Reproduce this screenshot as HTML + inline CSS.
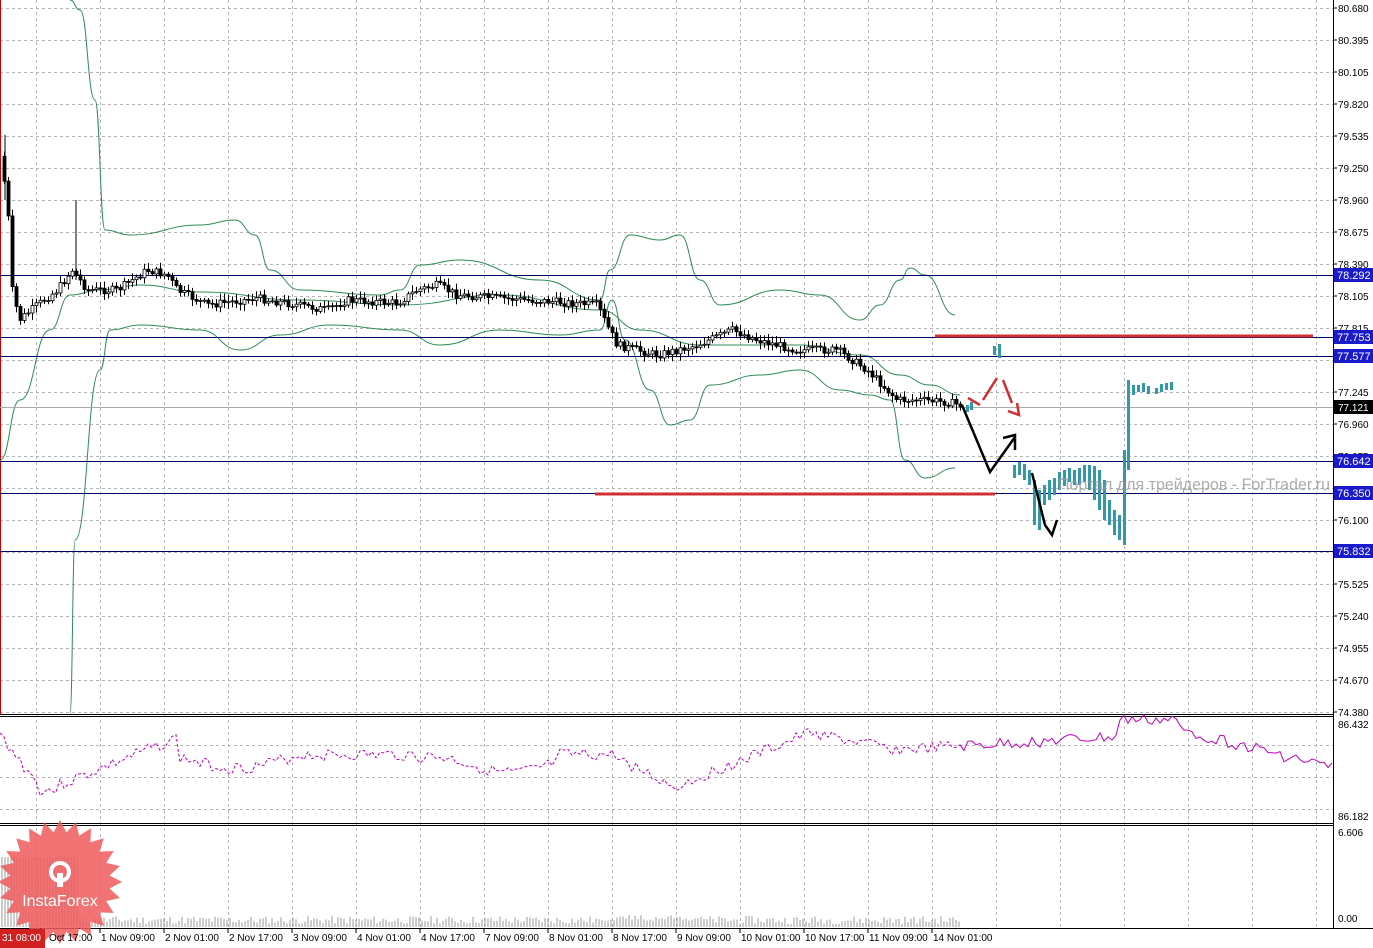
<!DOCTYPE html><html><head><meta charset="utf-8"><style>
body{margin:0;background:#fff;overflow:hidden}
svg{display:block;font-family:"Liberation Sans",sans-serif}
</style></head><body>
<svg id="s" width="1373" height="948" xmlns="http://www.w3.org/2000/svg">
<rect width="1373" height="948" fill="#fff"/>
<g id="grid"></g>
<line x1="0.5" y1="0" x2="0.5" y2="714" stroke="#c00"/>
<g fill="none" stroke="#2e8b57" stroke-width="1">
<path id="b1"/><path id="b2"/><path id="b3"/>
</g>
<g stroke="#000060" stroke-width="1">
<line x1="0" y1="275.5" x2="1333" y2="275.5"/><line x1="0" y1="337.5" x2="1333" y2="337.5"/>
<line x1="0" y1="356.5" x2="1333" y2="356.5"/><line x1="0" y1="461.5" x2="1333" y2="461.5"/>
<line x1="0" y1="493.5" x2="1333" y2="493.5"/><line x1="0" y1="551.5" x2="1333" y2="551.5"/>
</g>
<line x1="0" y1="407.5" x2="1333" y2="407.5" stroke="#aaa"/>
<line x1="935" y1="336" x2="1313" y2="336" stroke="#d03030" stroke-width="3"/>
<line x1="595" y1="494" x2="995" y2="494" stroke="#d03030" stroke-width="3"/>
<g id="candles"></g>
<g id="cyan" fill="#3399aa"></g>
<polyline points="962,405 990,472 1015,437" fill="none" stroke="#000" stroke-width="2.5"/>
<polyline points="1003,438 1015,435 1015,450" fill="none" stroke="#000" stroke-width="2.5"/>
<polyline points="1032,473 1045,525 1052,535 1057,520" fill="none" stroke="#000" stroke-width="2.5"/>
<path d="M968,398 L980,405 M983,400 L997,378 M1003,380 L1012,403 M1008,411 L1019,415 L1017,403" fill="none" stroke="#d03030" stroke-width="2.5"/>
<text x="1058" y="490" font-size="17" fill="#999" opacity="0.8" textLength="272" lengthAdjust="spacingAndGlyphs">Портал для трейдеров - ForTrader.ru</text>
<line x1="0" y1="714.5" x2="1333" y2="714.5" stroke="#000"/>
<line x1="0" y1="716.5" x2="1333" y2="716.5" stroke="#000"/>
<line x1="0" y1="823.5" x2="1333" y2="823.5" stroke="#000"/>
<line x1="0" y1="825.5" x2="1333" y2="825.5" stroke="#000"/>
<line x1="0" y1="928.5" x2="1373" y2="928.5" stroke="#000"/>
<line x1="1333.5" y1="0" x2="1333.5" y2="928" stroke="#000"/>
<polyline id="rsi" fill="none" stroke="#c000c0" stroke-width="1" stroke-dasharray="3,2"></polyline>
<polyline id="rsi2" fill="none" stroke="#c000c0" stroke-width="1"></polyline>
<g id="vol" stroke="#999" stroke-width="1"></g>
<polygon id="star" fill="#f05a5a" opacity="0.85"></polygon>
<g fill="#fff"><circle cx="60" cy="872" r="9" fill="none" stroke="#fff" stroke-width="4"/><rect x="57" y="873" width="6" height="14"/></g>
<text x="60" y="906" font-size="16" fill="#fff" text-anchor="middle">InstaForex</text>
<g id="lab" font-size="10" fill="#000"></g>
<rect x="0" y="929" width="45" height="19" fill="#d02020"/>
<text x="2" y="941" font-size="10" fill="#fff">31 08:00</text>
</svg>
<script>
var NS="http://www.w3.org/2000/svg";
function el(t,a,p){var e=document.createElementNS(NS,t);for(var k in a)e.setAttribute(k,a[k]);document.getElementById(p).appendChild(e);return e}
var G={stroke:"#b4b4b4","stroke-dasharray":"3,3","stroke-width":1};
function gl(a){for(var k in G)a[k]=G[k];el("line",a,"grid")}
for(var x=36;x<1333;x+=64)gl({x1:x+.5,y1:0,x2:x+.5,y2:928});
for(var y=8;y<714;y+=32)gl({x1:0,y1:y+.5,x2:1333,y2:y+.5});
for(var y=745;y<823;y+=32)gl({x1:0,y1:y+.5,x2:1333,y2:y+.5});
function smooth(pts){var d="M"+pts[0][0]+","+pts[0][1];for(var i=1;i<pts.length;i++){var p0=pts[i-1],p1=pts[i],mx=(p0[0]+p1[0])/2;d+=" C"+mx+","+p0[1]+" "+mx+","+p1[1]+" "+p1[0]+","+p1[1];}return d}
document.getElementById("b1").setAttribute("d",smooth([[70,0],[80,10],[95,100],[105,230],[130,235],[200,225],[235,220],[255,235],[270,270],[300,290],[380,295],[400,290],[420,265],[460,260],[540,280],[600,300],[610,270],[630,235],[660,240],[680,235],[700,280],[720,305],[780,290],[820,295],[860,320],[880,305],[900,280],[910,268],[925,275],[955,315]]));
document.getElementById("b2").setAttribute("d",smooth([[70,714],[75,540],[100,370],[110,330],[140,325],[200,330],[240,350],[280,335],[330,325],[400,330],[440,345],[500,330],[560,335],[600,330],[612,300],[625,340],[650,390],[670,425],[690,420],[710,385],[760,375],[800,370],[840,390],[870,395],[890,400],[905,460],[925,478],[955,468]]));
document.getElementById("b3").setAttribute("d",smooth([[0,460],[20,400],[50,330],[70,295],[100,290],[140,285],[200,292],[300,300],[400,305],[500,295],[600,310],[640,330],[700,345],[800,345],[860,355],[900,375],[930,385],[960,395]]));
var P=["80.680","80.395","80.105","79.820","79.535","79.250","78.960","78.675","78.390","78.105","77.815","77.530","77.245","76.960","76.675","76.390","76.100","75.810","75.525","75.240","74.955","74.670","74.380"];
P.forEach(function(p,i){var y=8+i*32;if([11,15,17].indexOf(i)>=0)return;el("line",{x1:1333,y1:y,x2:1337,y2:y,stroke:"#000"},"lab");var t=el("text",{x:1338,y:y+4},"lab");t.textContent=p;});
[["78.292",275],["77.753",337],["77.577",356],["76.642",461],["76.350",493],["75.832",551]].forEach(function(a){el("rect",{x:1334,y:a[1]-7,width:39,height:14,fill:"#1a1acd"},"lab");var t=el("text",{x:1337,y:a[1]+4,fill:"#fff","font-size":"11"},"lab");t.textContent=a[0];});
el("rect",{x:1334,y:400,width:39,height:14,fill:"#000"},"lab");var t=el("text",{x:1338,y:411,fill:"#fff"},"lab");t.textContent="77.121";
[["86.432",728],["86.182",820],["6.606",836],["0.00",922]].forEach(function(a){var t=el("text",{x:1338,y:a[1]},"lab");t.textContent=a[0];});
var TL=["1 Nov 09:00","2 Nov 01:00","2 Nov 17:00","3 Nov 09:00","4 Nov 01:00","4 Nov 17:00","7 Nov 09:00","8 Nov 01:00","8 Nov 17:00","9 Nov 09:00","10 Nov 01:00","10 Nov 17:00","11 Nov 09:00","14 Nov 01:00"];
var t=el("text",{x:49,y:941},"lab");t.textContent="Oct 17:00";
TL.forEach(function(s,i){var x=100+i*64;el("line",{x1:x,y1:928,x2:x,y2:933,stroke:"#000"},"lab");var t=el("text",{x:x+1,y:941},"lab");t.textContent=s;});
var K=[[2,150],[10,200],[15,290],[22,320],[40,305],[60,290],[75,270],[90,290],[120,290],[150,270],[170,275],[180,290],[210,305],[260,298],[300,305],[330,310],[350,300],[400,303],[420,290],[440,285],[460,295],[500,298],[560,302],[600,305],[612,330],[620,345],[660,355],[700,345],[735,330],[760,340],[800,350],[840,350],[870,370],[900,400],[920,400],[950,402],[962,405]];
function f(x){for(var i=1;i<K.length;i++)if(x<=K[i][0]){var a=K[i-1],b=K[i];return a[1]+(b[1]-a[1])*(x-a[0])/(b[0]-a[0]);}return 405}
var seed=7;function r(){seed=(seed*9301+49297)%233280;return seed/233280}
var prev=f(3);
for(var x=3;x<962;x+=4){var c=f(x+4)+(r()-.5)*8,o=prev;var hi=Math.min(o,c)-2-r()*5,lo=Math.max(o,c)+2+r()*5;
el("line",{x1:x+1.5,y1:hi,x2:x+1.5,y2:lo,stroke:"#000"},"candles");
el("rect",{x:x,y:Math.min(o,c),width:3,height:Math.max(1,Math.abs(c-o)),fill:c<o?"#fff":"#000",stroke:"#000","stroke-width":.8},"candles");prev=c;}
el("line",{x1:76,y1:200,x2:76,y2:280,stroke:"#000"},"candles");el("line",{x1:5,y1:135,x2:5,y2:200,stroke:"#000"},"candles");
var C=[[966,405,412],[970,402,410],[993,346,355],[998,344,358],[1013,465,478],[1018,462,475],[1023,464,480],[1028,470,485],[1033,480,525],[1038,490,530],[1043,485,505],[1048,480,500],[1053,478,495],[1058,472,490],[1063,470,486],[1068,468,482],[1073,470,485],[1078,468,485],[1083,465,482],[1088,465,490],[1093,466,500],[1098,470,510],[1103,480,520],[1108,500,525],[1113,510,535],[1118,515,540],[1123,450,545],[1127,380,470],[1132,385,395],[1137,385,392],[1142,383,392],[1147,386,394],[1155,388,394],[1160,384,392],[1165,383,390],[1170,382,390]];
C.forEach(function(a){el("rect",{x:a[0],y:a[1],width:3,height:a[2]-a[1]},"cyan")});
var pts=[],pts2=[];seed=3;
for(var x=0;x<1333;x+=4){var y;if(x<40)y=735+x*1.3;else if(x<60)y=790;else if(x<180)y=785-(x-60)*0.4;else if(x<300)y=760+Math.sin(x/30)*8;else if(x<420)y=755;else if(x<560)y=765+Math.sin(x/25)*8;else if(x<620)y=755;else if(x<680)y=760+(x-620)*0.5;else if(x<820)y=785-(x-680)*0.4;else if(x<900)y=735+(x-820)*0.2;else if(x<1120)y=750-(x-900)*0.06;else if(x<1180)y=720;else y=730+(x-1180)*0.25;
y+=(r()-.5)*12;var p=x+","+y.toFixed(1);if(x<965)pts.push(p);else pts2.push(p);if(x>=960&&x<965)pts2.push(p);}
document.getElementById("rsi").setAttribute("points",pts.join(" "));
document.getElementById("rsi2").setAttribute("points",pts2.join(" "));
seed=11;for(var x=2;x<962;x+=3){var h=x<80?70:(3+r()*8);if(x>600&&x<700)h=6+r()*6;el("line",{x1:x,y1:927,x2:x,y2:927-h},"vol");}
var s=[];for(var i=0;i<48;i++){var a=i*Math.PI/24,rr=i%2?50:62;s.push((60+rr*Math.sin(a)).toFixed(1)+","+(882-rr*Math.cos(a)).toFixed(1));}
document.getElementById("star").setAttribute("points",s.join(" "));
</script>
</body></html>
